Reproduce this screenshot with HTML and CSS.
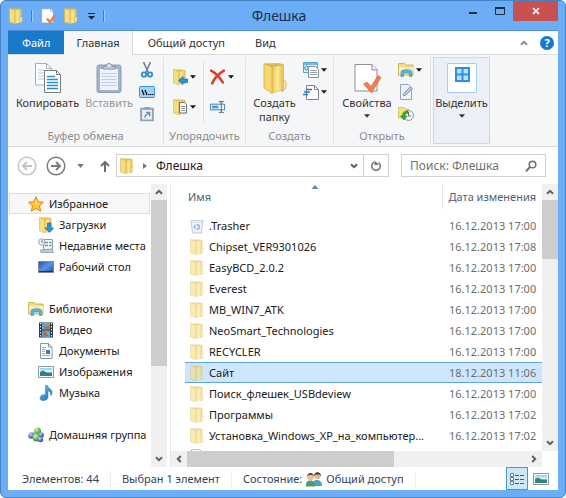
FILE: index.html
```html
<!DOCTYPE html>
<html lang="ru">
<head>
    <meta charset="UTF-8">
    <meta name="viewport" content="width=device-width, initial-scale=1.0">
    <title>Флешка</title>
    <link rel="stylesheet" href="styles.css">
</head>
<body>

<!-- Icon definitions -->
<svg class="icon-defs" width="0" height="0" aria-hidden="true">
    <defs>
        <linearGradient id="gold" x1="0" y1="0" x2="1" y2="0">
            <stop offset="0" stop-color="#e9c95c"/>
            <stop offset="0.5" stop-color="#fbe994"/>
            <stop offset="1" stop-color="#e3bc48"/>
        </linearGradient>
        <linearGradient id="screen" x1="0" y1="0" x2="1" y2="1">
            <stop offset="0" stop-color="#1c4fae"/>
            <stop offset="0.5" stop-color="#5b95e6"/>
            <stop offset="1" stop-color="#1b4aa3"/>
        </linearGradient>
        <linearGradient id="sea" x1="0" y1="0" x2="0" y2="1">
            <stop offset="0" stop-color="#8ed0f0"/>
            <stop offset="0.5" stop-color="#e4f6f8"/>
            <stop offset="0.6" stop-color="#2f8f8f"/>
            <stop offset="1" stop-color="#1b6b78"/>
        </linearGradient>
        <linearGradient id="note" x1="0" y1="0" x2="1" y2="1">
            <stop offset="0" stop-color="#6cc4f5"/>
            <stop offset="1" stop-color="#1565b8"/>
        </linearGradient>
        <radialGradient id="ball-blue" cx="0.35" cy="0.3" r="0.7">
            <stop offset="0" stop-color="#c8d4fa"/>
            <stop offset="1" stop-color="#2d43a8"/>
        </radialGradient>
        <radialGradient id="ball-green" cx="0.35" cy="0.3" r="0.7">
            <stop offset="0" stop-color="#d2f5b0"/>
            <stop offset="1" stop-color="#2f8f2a"/>
        </radialGradient>
    </defs>

    <symbol id="folder" viewBox="0 0 16 16">
        <path d="M1.500.5h9l3 .5v13l-6 1.500z" fill="#e3bf52"/>
        <path d="M6.500 3 13 1.500V14.500L6.500 15.800z" fill="url(#gold)"/>
        <path d="M1.500.5 6.800 2.500V15.800L1.500 14z" fill="#f6de7f" stroke="#d4ad3c" stroke-width=".5"/>
        <path d="M12 9h2v4.500l-2 1z" fill="#f3edc9" stroke="#cdb04e" stroke-width=".5"/>
    </symbol>
    <symbol id="folder-big" viewBox="0 0 24 32">
        <path d="M2 1.500 15 1l5 1v24l-9 4z" fill="#dfb94b"/>
        <path d="M20 19h2c1 0 1 .5 1 1v6l-4 4z" fill="#f7efc4" stroke="#c9a33c" stroke-width=".8"/>
        <path d="M9 5 20.500 2.500V27.500L9 31z" fill="url(#gold)" stroke="#d9b44a" stroke-width=".6"/>
        <path d="M1 1.500 9 5V31.500L1 26z" fill="#f3d874" stroke="#cfa73a" stroke-width=".7"/>
    </symbol>
    <symbol id="page-check" viewBox="0 0 28 30">
        <path d="M2 1.500h17l5 5V28H2z" fill="#fff" stroke="#8b8f96"/>
        <path d="M19 1.500V7h5" fill="#f2f3f4" stroke="#8b8f96"/>
        <path d="m10.500 21 3.500-2 4 4.500 7-11 3 2-9.500 15.500z" fill="#ef7f4d" stroke="#dd6636" stroke-width=".7"/>
    </symbol>
    <symbol id="copy" viewBox="0 0 28 32">
        <path d="M1.500 1.500h11l5 5V23h-16z" fill="#fff" stroke="#a8adb4"/>
        <path d="M12.500 1.500v5h5" fill="none" stroke="#a8adb4"/>
        <path d="M4 8h6M4 11h6M4 14h6M4 17h6" stroke="#c0c6cc"/>
        <path d="M10.500 8.500h12l4 4v18h-16z" fill="#fff" stroke="#777d85"/>
        <path d="M22.500 8.500v4h4" fill="none" stroke="#777d85"/>
        <path d="M13 14.500h8M13 17.500h11M13 20.500h11M13 23.500h11M13 26.500h11" stroke="#2c8cc8" stroke-width="1.500"/>
    </symbol>
    <symbol id="paste" viewBox="0 0 26 32">
        <rect x="1" y="3" width="24" height="27.500" rx="2" fill="#a3b2cd" stroke="#8e9dbb"/>
        <path d="M4 7h18v21H4z" fill="#eef2fa"/>
        <path d="M5.500 11.500h15M5.500 14.500h15M5.500 17.500h15M5.500 20.500h15M5.500 23.500h15" stroke="#c3cee2"/>
        <path d="M7 7V4.500h3c0-4 6-4 6 0h3V7z" fill="#c6d0e1" stroke="#8493ae"/>
        <circle cx="13" cy="3.500" r="1" fill="#fff"/>
    </symbol>
    <symbol id="cut" viewBox="0 0 16 16">
        <path d="m4.500 0 5 11M11.500 0l-5 11" stroke="#6d7f92" stroke-width="1.600" fill="none"/>
        <circle cx="5" cy="12.500" r="2.200" fill="none" stroke="#2a8fd0" stroke-width="1.800"/>
        <circle cx="11" cy="12.500" r="2.200" fill="none" stroke="#2a8fd0" stroke-width="1.800"/>
    </symbol>
    <symbol id="path" viewBox="0 0 16 12">
        <rect x=".5" y=".5" width="15" height="11" rx="1" fill="#9fd4fb" stroke="#3f8fd8"/>
        <path d="m3 4 2 5M6 4l2 5" stroke="#111" stroke-width="1.300"/>
        <path d="M9 8h1.500v1H9zM11 8h1.500v1H11zM13 8h1.500v1H13z" fill="#111"/>
    </symbol>
    <symbol id="shortcut" viewBox="0 0 14 15">
        <path d="M1.500 2.500h11v11h-11z" fill="#edf1f8" stroke="#93a1ba" stroke-width="1.800"/>
        <path d="M4.500 1h5v2.500h-5z" fill="#93a1ba"/>
        <path d="M5 11c0-2 1-3 4-4M6 6h3.500v3.500" fill="none" stroke="#7587a6" stroke-width="1.300"/>
    </symbol>
    <symbol id="move" viewBox="0 0 16 16">
        <use href="#folder" width="16" height="16"/>
        <path d="m6.500 11.500 4.500-4v2.500h4.500v3.500H11V15.500z" fill="#2a93d5" stroke="#1769a8" stroke-width=".7"/>
    </symbol>
    <symbol id="copy-to" viewBox="0 0 16 16">
        <use href="#folder" width="16" height="16"/>
        <path d="M7.500 3.500h5l2 2v8.500h-7z" fill="#fff" stroke="#6b7078"/>
        <path d="M9 7.500h4M9 9.500h4M9 11.500h4" stroke="#8b929b"/>
    </symbol>
    <symbol id="delete" viewBox="0 0 15 14">
        <path d="M1 1c4 2 8 6 11 11M13 1C8 4 4 8 2 13" fill="none" stroke="#d7402c" stroke-width="2.400" stroke-linecap="round"/>
    </symbol>
    <symbol id="rename" viewBox="0 0 17 13">
        <path d="M.5 3.500h15v6H.5z" fill="#fff" stroke="#2f79bb"/>
        <path d="M2 5h7v3H2z" fill="#3e9ee0"/>
        <path d="M9.500.5c1.500 0 2.500.5 2.500 1.500 0-1 1-1.500 2.500-1.500M9.500 12.500c1.500 0 2.500-.5 2.500-1.500 0 1 1 1.500 2.500 1.500M12 2v9" fill="none" stroke="#5d6f82" stroke-width="1.200"/>
    </symbol>
    <symbol id="new-item" viewBox="0 0 16 16">
        <path d="M.5.5h14v10H.5z" fill="#d9effb" stroke="#52a3d8"/>
        <path d="M1 1h13v2H1z" fill="#6ebbe8"/>
        <circle cx="3.500" cy="6" r="1.800" fill="none" stroke="#3487bd"/>
        <path d="M5.500 4.500h7l3 3v8h-10z" fill="#fff" stroke="#8a9099"/>
        <path d="M7 8.500h7M7 10.500h7M7 12.500h7" stroke="#9aa2ac"/>
    </symbol>
    <symbol id="easy-access" viewBox="0 0 16 16">
        <path d="M3.500 1.500h8l4 4v10h-12z" fill="#fff" stroke="#7e848c"/>
        <path d="M11.500 1.500v4h4" fill="none" stroke="#7e848c"/>
        <path d="M3 5.500h6M1 8h6M0 10.500h5" stroke="#2b78c0" stroke-width="1.500"/>
    </symbol>
    <symbol id="library" viewBox="0 0 16 16">
        <path d="M.5 3V1.500h6l1 1.500h7.500v10H.5z" fill="#f3dc84" stroke="#c9a545" stroke-width=".8"/>
        <path d="M1 5h14v7H1z" fill="#fbeeb2"/>
        <path d="M3 14.500V10c0-3 11-3 11 0v4.500h-2.500V11h-6v3.500z" fill="#58b5e2" stroke="#2e89b8" stroke-width=".6"/>
    </symbol>
    <symbol id="edit" viewBox="0 0 16 16">
        <path d="M2.500.5h8l3 3v12h-11z" fill="#eef2f9" stroke="#97a5be"/>
        <path d="m5 12 1-3 6.500-6.500 2 2L8 11z" fill="#b8c4d9" stroke="#8292ae" stroke-width=".8"/>
    </symbol>
    <symbol id="history" viewBox="0 0 16 16">
        <path d="M.5 1.500h6l1 1.500h3v9H.5z" fill="#f6e07c" stroke="#d3b449" stroke-width=".7"/>
        <circle cx="10.500" cy="9.500" r="5" fill="#f3f6f8" stroke="#8d979f"/>
        <path d="M10.500 6v4H13" fill="none" stroke="#5e6a74"/>
        <path d="M10 5C6 5 4.500 7 4.500 10H2.500l3.500 4 3-4H7c0-2 1-3 3-3z" fill="#35b02e" stroke="#1d7d1c" stroke-width=".6"/>
    </symbol>
    <symbol id="select" viewBox="0 0 30 30">
        <path d="M.5.500h29v29H.5z" fill="#fdfeff" stroke="#a6cdf0"/>
        <path d="M8 4h15v15H8z" fill="#2f8ee0"/>
        <path d="M10 6h4.500v4.500H10zM16.500 6H21v4.500h-4.500zM10 12.500h4.500V17H10zM16.500 12.500H21V17h-4.500z" fill="#b8e2ff"/>
    </symbol>
    <symbol id="arrow" viewBox="0 0 5 3"><path d="M0 0h5L2.500 3z" fill="currentColor"/></symbol>
    <symbol id="chevron" viewBox="0 0 8 6"><path d="m1 4.800 3-3 3 3" fill="none" stroke="currentColor" stroke-width="2"/></symbol>

    <symbol id="star" viewBox="0 0 16 16">
        <path d="m8 .8 2.200 4.900 5.300.6-4 3.600 1.200 5.300L8 12.500l-4.700 2.700 1.200-5.300-4-3.600 5.300-.6z" fill="#ffc52e" stroke="#e57f1c"/>
        <path d="m8 3 1.300 3.800 3 .4-5.300 2z" fill="#ffe48a"/>
    </symbol>
    <symbol id="downloads" viewBox="0 0 16 16">
        <use href="#folder" width="16" height="16"/>
        <path d="M9.500 6H13v5h2.500l-4.200 4.500L7 11h2.500z" fill="#2b95dc" stroke="#1769ab" stroke-width=".7"/>
    </symbol>
    <symbol id="recent" viewBox="0 0 16 16">
        <path d="M5.500 1.500h9v10h-9z" fill="#f2f6fa" stroke="#8c99a6"/>
        <path d="M7 4.500h3M7 7.500h3M11 4.500h2.500M11 7.500h2.500" stroke="#5d9fca" stroke-width="1.500"/>
        <path d="m2 12 12-1 1.500 3.500H3z" fill="#c5cbd1" stroke="#8d949b" stroke-width=".7"/>
        <circle cx="3.800" cy="4" r="3.200" fill="#f5f6f7" stroke="#9aa1a8"/>
        <path d="M3.800 2v2.200h1.700" fill="none" stroke="#5b6268" stroke-width=".8"/>
    </symbol>
    <symbol id="desktop" viewBox="0 0 16 16">
        <path d="M.5 2.500h15v11H.5z" fill="url(#screen)" stroke="#7e8894"/>
        <path d="M1 12.500h14" stroke="#26333f"/>
    </symbol>
    <symbol id="video" viewBox="0 0 16 16">
        <path d="M1 .500h14v15H1z" fill="#26343c"/>
        <path d="M4 1h8v6.500H4zM4 8.500h8V15H4z" fill="#58aee0"/>
        <path d="m5 3 3 2 3-2v4.500H7zM5 9l3 1 2 4-4 1z" fill="#b8643c"/>
        <path d="M2.500 1v14M13.500 1v14" stroke="#e7ecef" stroke-width="1.200" stroke-dasharray="1.500 1.500"/>
    </symbol>
    <symbol id="document" viewBox="0 0 16 16">
        <path d="M2.500.5h8l3.500 3.500v11.500H2.500z" fill="#fff" stroke="#8b959e"/>
        <path d="M10.500.5V4H14" fill="none" stroke="#8b959e"/>
        <path d="M4 4.500h4M4 6.500h4M4 8.500h3M4 10.500h3M4 12.500h8" stroke="#9cabb8"/>
        <path d="M8 7h4v4H8z" fill="#3678bd"/>
    </symbol>
    <symbol id="picture" viewBox="0 0 16 16">
        <path d="M.5 2.500h15v11H.5z" fill="#fff" stroke="#8c979f"/>
        <path d="M2 4h12v8H2z" fill="url(#sea)"/>
        <path d="m2 8 3-1.500 4 2.500 5 .5V12H2z" fill="#2d817f"/>
    </symbol>
    <symbol id="music" viewBox="0 0 16 16">
        <path d="M7.500.5H9.500c.5 3 5 3.500 4.500 7.500 0 1-.5 2-1.500 2.500.8-2.500-.5-4-2.500-4.800V12c0 4-7.500 5-8 1.500C1.500 10.500 5 9 7.500 10z" fill="url(#note)" stroke="#2b7cbc" stroke-width=".5"/>
    </symbol>
    <symbol id="homegroup" viewBox="0 0 16 16">
        <circle cx="9.500" cy="4" r="3.500" fill="url(#ball-green)"/>
        <circle cx="3.500" cy="8.500" r="3.300" fill="url(#ball-blue)"/>
        <circle cx="13" cy="8" r="2.800" fill="url(#ball-blue)"/>
        <circle cx="8.500" cy="10.500" r="4" fill="url(#ball-green)"/>
        <circle cx="12.500" cy="12.500" r="2.700" fill="url(#ball-blue)"/>
    </symbol>
    <symbol id="bin" viewBox="0 0 16 16">
        <path d="M2 2.500h12L12.500 15h-9z" fill="#e0ebf5" stroke="#96a8b8"/>
        <path d="M2 2.500h12v1.500H2z" fill="#f8fbfd" stroke="#96a8b8" stroke-width=".6"/>
        <circle cx="8" cy="9" r="2.300" fill="none" stroke="#3a7fd5" stroke-width="1.400" stroke-dasharray="3.500 1.200"/>
    </symbol>
    <symbol id="file" viewBox="0 0 16 16">
        <path d="M2.500.5h8l3.500 3.500v11.500H2.500z" fill="#fff" stroke="#8b959e"/>
    </symbol>
    <symbol id="people" viewBox="0 0 16 16">
        <path d="M7 15c0-5 1-6 4-6s5 2 5 6z" fill="#4aa7b8"/>
        <circle cx="11.500" cy="5" r="3.200" fill="#e5b48c"/>
        <path d="M8 5c0-5 7-5 7 0l-1.500-1.500h-4z" fill="#4b3424"/>
        <path d="M0 15.500C0 11 1 9.500 4.500 9.500s4.500 2 4.500 6z" fill="#4f9a6a"/>
        <circle cx="4.500" cy="6" r="3.300" fill="#edc29b"/>
        <path d="M1 6c0-5.500 7-5.500 7 0L6.500 4h-4z" fill="#5e3b23"/>
    </symbol>
    <symbol id="details" viewBox="0 0 16 16">
        <path d="M1.500 2.500h3v3h-3zM1.500 6.500h3v3h-3zM1.500 10.500h3v3h-3z" fill="#fff" stroke="#737d84"/>
        <path d="M6 4.500h4M11 4.500h4M6 8.500h4M11 8.500h4M6 12.500h4M11 12.500h4" stroke="#4d5960"/>
    </symbol>
</svg>

<div class="window">
    <header class="titlebar">
        <div class="quick-access">
            <svg class="icon"><use href="#folder"/></svg>
            <span class="divider"></span>
            <button class="tool" aria-label="Свойства"><svg class="icon"><use href="#page-check"/></svg></button>
            <button class="tool" aria-label="Создать папку"><svg class="icon"><use href="#folder"/></svg></button>
            <button class="tool customize" aria-label="Настройка панели"><svg width="7" height="7" viewBox="0 0 7 7"><path d="M0 0h7v1H0zM0 3h7L3.500 6.500z" fill="#1b2230"/></svg></button>
            <span class="divider"></span>
        </div>
        <h1 class="title">Флешка</h1>
        <div class="window-buttons">
            <button class="tool" aria-label="Свернуть"><svg width="10" height="10" viewBox="0 0 10 10"><path d="M1 6h8v2H1z" fill="#1f2c3d"/></svg></button>
            <button class="tool" aria-label="Развернуть"><svg width="10" height="8" viewBox="0 0 10 8"><path d="M.5 1h9v6.500h-9z" fill="none" stroke="#1f2c3d"/><path d="M0 0h10v2H0z" fill="#1f2c3d"/></svg></button>
            <button class="tool close" aria-label="Закрыть"><svg width="8" height="8" viewBox="0 0 8 8"><path d="m1 1 6 6M7 1 1 7" stroke="#fff" stroke-width="1.700"/></svg></button>
        </div>
    </header>

    <div class="client">
        <nav class="tabs">
            <button class="tab file">Файл</button>
            <button class="tab active">Главная</button>
            <button class="tab">Общий доступ</button>
            <button class="tab">Вид</button>
            <div class="tabs-end">
                <button class="tool" aria-label="Свернуть ленту"><svg class="chev"><use href="#chevron"/></svg></button>
                <button class="tool help" aria-label="Справка">?</button>
            </div>
        </nav>

        <section class="ribbon">
            <div class="group clipboard">
                <div class="group-body">
                    <button class="big"><svg width="28" height="32"><use href="#copy"/></svg><span>Копировать</span></button>
                    <button class="big disabled"><svg width="26" height="32"><use href="#paste"/></svg><span>Вставить</span></button>
                    <div class="stack">
                        <button class="tool" aria-label="Вырезать"><svg class="icon"><use href="#cut"/></svg></button>
                        <button class="tool" aria-label="Скопировать путь"><svg class="icon"><use href="#path"/></svg></button>
                        <button class="tool" aria-label="Вставить ярлык"><svg class="icon"><use href="#shortcut"/></svg></button>
                    </div>
                </div>
                <div class="group-name">Буфер обмена</div>
            </div>

            <div class="group organize">
                <div class="group-body">
                    <div class="stack wide">
                        <button class="tool" aria-label="Переместить в"><svg class="icon"><use href="#move"/></svg><svg class="arrow"><use href="#arrow"/></svg></button>
                        <button class="tool" aria-label="Копировать в"><svg class="icon"><use href="#copy-to"/></svg><svg class="arrow"><use href="#arrow"/></svg></button>
                    </div>
                    <div class="stack wide lined">
                        <button class="tool" aria-label="Удалить"><svg class="icon"><use href="#delete"/></svg><svg class="arrow"><use href="#arrow"/></svg></button>
                        <button class="tool" aria-label="Переименовать"><svg class="icon"><use href="#rename"/></svg></button>
                    </div>
                </div>
                <div class="group-name">Упорядочить</div>
            </div>

            <div class="group create">
                <div class="group-body">
                    <button class="big"><svg width="24" height="32"><use href="#folder-big"/></svg><span>Создать папку</span></button>
                    <div class="stack">
                        <button class="tool" aria-label="Создать элемент"><svg class="icon"><use href="#new-item"/></svg><svg class="arrow"><use href="#arrow"/></svg></button>
                        <button class="tool" aria-label="Простой доступ"><svg class="icon"><use href="#easy-access"/></svg><svg class="arrow"><use href="#arrow"/></svg></button>
                    </div>
                </div>
                <div class="group-name">Создать</div>
            </div>

            <div class="group open">
                <div class="group-body">
                    <button class="big"><svg width="28" height="32"><use href="#page-check"/></svg><span>Свойства</span><svg class="arrow"><use href="#arrow"/></svg></button>
                    <div class="stack">
                        <button class="tool" aria-label="Открыть"><svg class="icon"><use href="#library"/></svg><svg class="arrow"><use href="#arrow"/></svg></button>
                        <button class="tool" aria-label="Изменить"><svg class="icon"><use href="#edit"/></svg></button>
                        <button class="tool" aria-label="Журнал"><svg class="icon"><use href="#history"/></svg></button>
                    </div>
                </div>
                <div class="group-name">Открыть</div>
            </div>

            <button class="big select"><svg width="30" height="32"><use href="#select"/></svg><span>Выделить</span><svg class="arrow"><use href="#arrow"/></svg></button>
        </section>

        <div class="address-row">
            <button class="round off" aria-label="Назад"><svg width="20" height="20" viewBox="0 0 20 20"><circle cx="10" cy="10" r="8.800"/><path d="M15 10H6m4-4-4 4 4 4"/></svg></button>
            <button class="round" aria-label="Вперед"><svg width="20" height="20" viewBox="0 0 20 20"><circle cx="10" cy="10" r="8.800"/><path d="M5 10h9m-4-4 4 4-4 4"/></svg></button>
            <button class="tool recent" aria-label="Последние расположения"><svg width="7" height="4"><use href="#arrow"/></svg></button>
            <button class="tool up" aria-label="Вверх"><svg width="10" height="12" viewBox="0 0 10 12"><path d="M5 12V2M1 6l4-4 4 4" fill="none" stroke="#6d6d6d" stroke-width="2"/></svg></button>
            <div class="address">
                <svg class="icon"><use href="#folder"/></svg>
                <svg class="crumb" width="4" height="6" viewBox="0 0 4 6"><path d="M0 0v6l4-3z" fill="#777"/></svg>
                <a href="#">Флешка</a>
                <button class="tool drop" aria-label="Предыдущие расположения"><svg class="chev down"><use href="#chevron"/></svg></button>
                <button class="tool refresh" aria-label="Обновить"><svg width="12" height="12" viewBox="0 0 12 12"><path d="M8.500 2.500A4.300 4.300 0 1 1 4 2.200" fill="none" stroke="#707070" stroke-width="1.500"/><path d="M8 0v4.500H3.500z" fill="#707070" transform="rotate(90 6 3)"/></svg></button>
            </div>
            <div class="search">
                <input type="search" placeholder="Поиск: Флешка" aria-label="Поиск: Флешка">
                <svg width="12" height="12" viewBox="0 0 12 12"><circle cx="7.500" cy="4.500" r="3.300" fill="none" stroke="#707070" stroke-width="1.500"/><path d="m5 7-4 4.300" stroke="#707070" stroke-width="2"/></svg>
            </div>
        </div>

        <main class="content">
            <nav class="tree">
                <div class="tree-items">
                    <a class="node current" href="#"><svg class="icon"><use href="#star"/></svg>Избранное</a>
                    <a class="node child" href="#"><svg class="icon"><use href="#downloads"/></svg>Загрузки</a>
                    <a class="node child" href="#"><svg class="icon"><use href="#recent"/></svg>Недавние места</a>
                    <a class="node child" href="#"><svg class="icon"><use href="#desktop"/></svg>Рабочий стол</a>
                    <a class="node section" href="#"><svg class="icon"><use href="#library"/></svg>Библиотеки</a>
                    <a class="node child" href="#"><svg class="icon"><use href="#video"/></svg>Видео</a>
                    <a class="node child" href="#"><svg class="icon"><use href="#document"/></svg>Документы</a>
                    <a class="node child" href="#"><svg class="icon"><use href="#picture"/></svg>Изображения</a>
                    <a class="node child" href="#"><svg class="icon"><use href="#music"/></svg>Музыка</a>
                    <a class="node section" href="#"><svg class="icon"><use href="#homegroup"/></svg>Домашняя группа</a>
                </div>
                <div class="scroll vertical tree-scroll">
                    <button aria-label="Прокрутить вверх"><svg class="chev"><use href="#chevron"/></svg></button>
                    <div class="track"><div class="thumb"></div></div>
                    <button aria-label="Прокрутить вниз"><svg class="chev down"><use href="#chevron"/></svg></button>
                </div>
            </nav>

            <section class="files">
                <div class="files-top">
                    <div class="list">
                        <table>
                            <thead>
                                <tr>
                                    <th class="name"><div class="head-name">Имя<svg class="sort" width="8" height="4"><use href="#arrow"/></svg></div></th>
                                    <th class="date">Дата изменения</th>
                                </tr>
                            </thead>
                            <tbody>
                                <tr><td><div class="cell"><svg class="icon"><use href="#bin"/></svg><span>.Trasher</span></div></td><td>16.12.2013 17:00</td></tr>
                                <tr><td><div class="cell"><svg class="icon"><use href="#folder"/></svg><span>Chipset_VER9301026</span></div></td><td>16.12.2013 17:08</td></tr>
                                <tr><td><div class="cell"><svg class="icon"><use href="#folder"/></svg><span>EasyBCD_2.0.2</span></div></td><td>16.12.2013 17:00</td></tr>
                                <tr><td><div class="cell"><svg class="icon"><use href="#folder"/></svg><span>Everest</span></div></td><td>16.12.2013 17:00</td></tr>
                                <tr><td><div class="cell"><svg class="icon"><use href="#folder"/></svg><span>MB_WIN7_ATK</span></div></td><td>16.12.2013 17:00</td></tr>
                                <tr><td><div class="cell"><svg class="icon"><use href="#folder"/></svg><span>NeoSmart_Technologies</span></div></td><td>16.12.2013 17:00</td></tr>
                                <tr><td><div class="cell"><svg class="icon"><use href="#folder"/></svg><span>RECYCLER</span></div></td><td>16.12.2013 17:00</td></tr>
                                <tr class="selected"><td><div class="cell"><svg class="icon"><use href="#folder"/></svg><span>Сайт</span></div></td><td>18.12.2013 11:06</td></tr>
                                <tr><td><div class="cell"><svg class="icon"><use href="#folder"/></svg><span>Поиск_флешек_USBdeview</span></div></td><td>16.12.2013 17:00</td></tr>
                                <tr><td><div class="cell"><svg class="icon"><use href="#folder"/></svg><span>Программы</span></div></td><td>16.12.2013 17:02</td></tr>
                                <tr><td><div class="cell"><svg class="icon"><use href="#folder"/></svg><span>Установка_Windows_XP_на_компьютер...</span></div></td><td>16.12.2013 17:02</td></tr>
                                <tr><td><div class="cell"><svg class="icon"><use href="#file"/></svg></div></td><td></td></tr>
                            </tbody>
                        </table>
                    </div>
                    <div class="scroll vertical list-scroll">
                        <button aria-label="Прокрутить вверх"><svg class="chev"><use href="#chevron"/></svg></button>
                        <div class="track"><div class="thumb"></div></div>
                        <button aria-label="Прокрутить вниз"><svg class="chev down"><use href="#chevron"/></svg></button>
                    </div>
                </div>
                <div class="scroll horizontal">
                    <button aria-label="Прокрутить влево"><svg class="chev left"><use href="#chevron"/></svg></button>
                    <div class="track"><div class="thumb"></div></div>
                    <button aria-label="Прокрутить вправо"><svg class="chev right"><use href="#chevron"/></svg></button>
                </div>
            </section>
        </main>

        <footer class="status">
            <span class="status-item">Элементов: 44</span>
            <span class="status-item">Выбран 1 элемент</span>
            <span class="status-item">Состояние:<svg class="icon"><use href="#people"/></svg>Общий доступ</span>
            <div class="views">
                <button class="view on" aria-label="Таблица"><svg class="icon"><use href="#details"/></svg></button>
                <button class="view" aria-label="Крупные значки"><svg class="icon"><use href="#picture"/></svg></button>
            </div>
        </footer>
    </div>
</div>

</body>
</html>
```
FILE: styles.css
```css
* {
    box-sizing: border-box;
}

body {
    margin: 0;
    font-family: "Noto Sans", "Open Sans", sans-serif;
    font-size: 11px;
    line-height: 16px;
    color: #1a1a1a;
    background: #fff;
}

button {
    font: inherit;
    color: inherit;
    background: none;
    border: none;
    padding: 0;
}

a {
    color: inherit;
    text-decoration: none;
}

svg {
    display: block;
    flex: none;
}

.icon-defs {
    position: absolute;
}

.icon {
    width: 16px;
    height: 16px;
}

.tool {
    display: flex;
    align-items: center;
    justify-content: center;
    gap: 2px;
}

.arrow {
    width: 6px;
    height: 4px;
}

.chev {
    width: 8px;
    height: 6px;
    color: #606060;
}

.down { transform: rotate(180deg); }
.left { transform: rotate(-90deg); }
.right { transform: rotate(90deg); }

/* Window frame */
.window {
    display: flex;
    flex-direction: column;
    height: 100vh;
    padding: 0 7px 7px;
    background: #6badf6;
    border: 1px solid #4583c4;
    border-radius: 6px;
}

.titlebar {
    display: grid;
    grid-template-columns: 1fr auto 1fr;
    height: 29px;
    flex: none;
}

.quick-access {
    display: flex;
    align-items: center;
    gap: 7px;
}

.divider {
    width: 2px;
    height: 12px;
    border-left: 1px solid #3f7fc6;
    border-right: 1px solid #9ccbfb;
}

.customize {
    width: 10px;
}

.title {
    margin: 0;
    padding-right: 8px;
    font-size: 14px;
    font-weight: normal;
    line-height: 30px;
    color: #1c2f4a;
}

.window-buttons {
    display: flex;
    justify-content: flex-end;
    height: 20px;
}

.window-buttons .tool {
    width: 27px;
}

.window-buttons .close {
    width: 45px;
    background: #c75050;
}

.client {
    display: flex;
    flex-direction: column;
    flex: 1;
    min-height: 0;
    background: #fff;
    border-top: 1px solid #4f90d6;
}

/* Tabs */
.tabs {
    display: flex;
    height: 24px;
    flex: none;
    border-bottom: 1px solid #dadbdc;
}

.tab {
    padding: 0 15px;
    color: #333;
}

.tab.file {
    padding: 0 14px;
    background: #1979ca;
    color: #fff;
}

.tab.active {
    height: 24px;
    padding: 0 12px;
    background: #f5f6f7;
    border-right: 1px solid #dadbdc;
}

.tabs-end {
    display: flex;
    align-items: center;
    gap: 12px;
    margin-left: auto;
    padding-right: 4px;
}

.tabs-end .chev {
    color: #8a8a8a;
}

.help {
    width: 14px;
    height: 14px;
    border-radius: 50%;
    background: #1979ca;
    color: #fff;
    font-weight: bold;
}

/* Ribbon */
.ribbon {
    display: flex;
    height: 92px;
    flex: none;
    padding: 2px 0;
    background: #f5f6f7;
    border-bottom: 1px solid #dadbdc;
}

.group {
    display: flex;
    flex-direction: column;
    border-right: 1px solid #e0e2e4;
}

.group-body {
    display: flex;
    justify-content: center;
    gap: 6px;
    flex: 1;
    padding-top: 5px;
}

.group-name {
    color: #8c8c8c;
    text-align: center;
    white-space: nowrap;
}

.clipboard { width: 156px; }
.organize { width: 82px; }
.create { width: 88px; }
.open { width: 97px; }

.organize .group-body {
    justify-content: flex-start;
    gap: 0;
}

.create .big {
    width: 44px;
}

.big {
    display: flex;
    flex-direction: column;
    align-items: center;
    color: #333;
    line-height: 14px;
}

.big span {
    padding-top: 2px;
}

.big .arrow {
    margin-top: 4px;
}

.disabled {
    color: #999;
}

.stack {
    display: flex;
    flex-direction: column;
    align-items: flex-start;
    gap: 6px;
}

.stack.wide {
    gap: 14px;
    height: 60px;
    padding: 7px 7px 0 8px;
}

.stack.lined {
    padding-left: 6px;
    border-left: 1px solid #dcdedf;
}

.select {
    width: 57px;
    margin-left: 2px;
    padding-top: 4px;
    background: #eaf0f6;
    border: 1px solid #c2dcf3;
}

/* Address bar */
.address-row {
    display: flex;
    align-items: center;
    height: 37px;
    flex: none;
    padding: 0 12px 0 9px;
    font-size: 12px;
}

.round circle,
.round path {
    fill: none;
    stroke: #7a7a7a;
    stroke-width: 1.5;
}

.round path {
    stroke-width: 2;
}

.round.off circle,
.round.off path {
    stroke: #c4c4c4;
}

.round + .round {
    margin-left: 9px;
}

.recent {
    width: 28px;
    color: #777;
}

.up {
    width: 22px;
}

.address {
    display: flex;
    align-items: center;
    flex: 1;
    height: 23px;
    padding-left: 2px;
    border: 1px solid #d0d0d0;
}

.crumb {
    margin: 0 9px 0 8px;
}

.drop {
    width: 18px;
    margin-left: auto;
}

.refresh {
    width: 25px;
    height: 100%;
    border-left: 1px solid #d0d0d0;
}

.search {
    display: flex;
    align-items: center;
    width: 145px;
    height: 23px;
    margin-left: 12px;
    padding: 0 8px;
    border: 1px solid #d0d0d0;
}

.search input {
    flex: 1;
    min-width: 0;
    padding: 0;
    border: none;
    outline: none;
    font: inherit;
    background: none;
}

.search input::placeholder {
    color: #707070;
    opacity: 1;
}

/* Content */
.content {
    display: flex;
    flex: 1;
    min-height: 0;
}

.tree {
    display: flex;
    width: 163px;
    flex: none;
    padding-right: 3px;
    border-right: 1px solid #e8e8e8;
}

.tree-items {
    flex: 1;
    min-width: 0;
    padding: 9px 1px 0;
}

.node {
    display: flex;
    align-items: center;
    gap: 5px;
    height: 21px;
    padding-left: 19px;
    white-space: nowrap;
}

.node.child {
    padding-left: 29px;
}

.node.section {
    margin-top: 21px;
}

.node.current {
    padding-left: 18px;
    background: #f7f7f7;
    border: 1px solid #dedede;
}

.scroll {
    display: flex;
    flex: none;
    background: #f0f0f0;
}

.scroll button {
    display: flex;
    align-items: center;
    justify-content: center;
    width: 16px;
    height: 16px;
    flex: none;
}

.vertical {
    flex-direction: column;
    width: 16px;
}

.track {
    flex: 1;
}

.thumb {
    background: #cdcdcd;
}

.tree-scroll .thumb { height: 66%; }
.list-scroll .thumb { height: 25%; }

.horizontal {
    height: 16px;
    margin-right: 16px;
}

.horizontal .thumb {
    width: 61%;
    height: 100%;
}

.files {
    display: flex;
    flex-direction: column;
    flex: 1;
    min-width: 0;
}

.files-top {
    display: flex;
    flex: 1;
    min-height: 0;
}

.list {
    flex: 1;
    min-width: 0;
    padding-left: 14px;
    overflow: hidden;
}

table {
    width: 100%;
    table-layout: fixed;
    border-collapse: collapse;
}

th {
    height: 25px;
    padding: 0;
    font-weight: normal;
    text-align: left;
    color: #4c607a;
    white-space: nowrap;
}

th.date {
    width: 100px;
    padding-left: 6px;
    border-left: 1px solid #e5e5e5;
}

.head-name {
    display: grid;
    grid-template-columns: 1fr auto 1fr;
    height: 25px;
    padding-left: 3px;
    line-height: 25px;
}

.sort {
    margin-top: 1px;
    color: #4b8fae;
    transform: rotate(180deg);
}

tbody::before {
    content: "";
    display: block;
    height: 6px;
}

td {
    height: 21px;
    padding: 0;
    white-space: nowrap;
}

td + td {
    padding-left: 7px;
    color: #6d6d6d;
}

.cell {
    display: flex;
    align-items: center;
    gap: 4px;
    padding-left: 4px;
}

.cell .icon {
    opacity: 0.6;
}

.selected td {
    background: #cde6fd;
    box-shadow: inset 0 1px #5fa3dd, inset 0 -1px #5fa3dd;
}

/* Status bar */
.status {
    display: flex;
    align-items: center;
    height: 23px;
    flex: none;
    padding: 0 6px 0 14px;
    color: #2f4560;
}

.status-item {
    display: flex;
    align-items: center;
    gap: 4px;
    padding-right: 11px;
    margin-right: 11px;
    border-right: 1px solid #ececec;
}

.views {
    display: flex;
    gap: 2px;
    height: 100%;
    margin-left: auto;
}

.view {
    display: flex;
    align-items: center;
    justify-content: center;
    width: 22px;
}

.view.on {
    background: #cbe8f6;
    border: 1px solid #3fa0d0;
}
```
